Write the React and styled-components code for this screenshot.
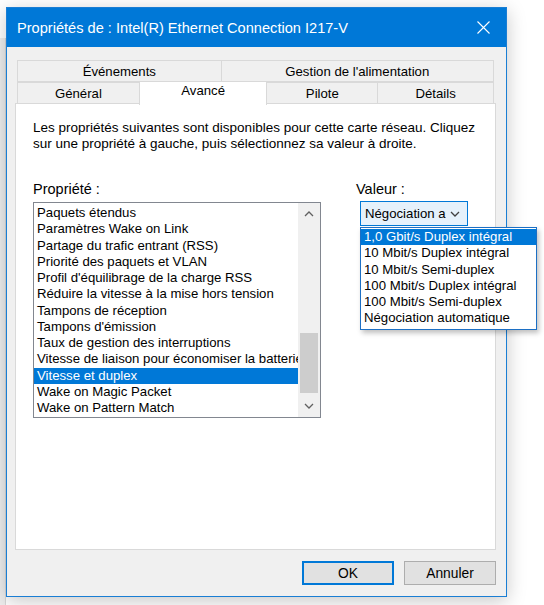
import React from "react";
import styled, { createGlobalStyle } from "styled-components";

const Global = createGlobalStyle`
  html, body { margin: 0; padding: 0; background: #ffffff; }
  body { font-family: "Liberation Sans", Arial, sans-serif; font-size: 13.2px; color: #000; }
  * { box-sizing: border-box; }
`;

const Page = styled.div`
  width: 544px;
  height: 605px;
  display: flex;
  align-items: flex-start;
  background: #ffffff;
  overflow: hidden;
`;

const BackWindow = styled.div`
  width: 6px;
  height: 605px;
  margin-top: 38px;
  background: #eeeeee;
  border-right: 1px solid #d8d8d8;
`;

const Window = styled.div`
  margin-top: 7px;
  width: 501px;
  height: 590px;
  border: 1px solid #1a7ed4;
  background: #f0f0f0;
  display: flex;
  flex-direction: column;
  box-shadow: 0 4px 18px rgba(0, 0, 0, 0.22);
`;

const TitleBar = styled.div`
  height: 39px;
  background: #0078d7;
  display: flex;
  align-items: center;
  justify-content: space-between;
  padding: 0 16px 0 10px;
  color: #ffffff;
`;

const Title = styled.div`
  font-size: 14.6px;
`;

const Body = styled.div`
  flex: 1;
  display: flex;
  flex-direction: column;
  padding: 13px 10px 10px 8px;
`;

const Tabs = styled.div`
  display: flex;
  flex-direction: column;
  padding-left: 2px;
  width: 479px;
`;

const TabRow = styled.div`
  display: flex;
  height: 22px;
  align-items: flex-end;
`;

const Tab = styled.div`
  width: ${(p) => p.$w}px;
  height: ${(p) => (p.$active ? 24 : 22)}px;
  margin-left: -1px;
  margin-bottom: ${(p) => (p.$active ? -1 : 0)}px;
  &:first-child { margin-left: 0; }
  background: ${(p) => (p.$active ? "#ffffff" : "#f0f0f0")};
  border: 1px solid #d9d9d9;
  border-bottom: ${(p) => (p.$active ? "none" : "1px solid #d9d9d9")};
  position: relative;
  z-index: ${(p) => (p.$active ? 2 : 1)};
  display: flex;
  align-items: ${(p) => (p.$active ? "flex-start" : "center")};
  padding-top: ${(p) => (p.$active ? 1 : 0)}px;
  justify-content: center;
  font-size: 13.2px;
`;

const Panel = styled.div`
  margin-top: -1px;
  width: 481px;
  height: 447px;
  background: #ffffff;
  border: 1px solid #d9d9d9;
  padding: 16px 10px 0 17px;
  display: flex;
  flex-direction: column;
`;

const Intro = styled.p`
  margin: 0;
  line-height: 16px;
  font-size: 13.5px;
  white-space: nowrap;
`;

const Columns = styled.div`
  margin-top: 28px;
  display: flex;
  gap: 35px;
`;

const Column = styled.div`
  display: flex;
  flex-direction: column;
`;

const Label = styled.div`
  font-size: 14.5px;
  line-height: 16px;
  margin-top: 1px;
  margin-bottom: ${(p) => p.$gap || 5}px;
`;

const ListBox = styled.div`
  width: 288px;
  height: 216px;
  border: 1px solid #828790;
  display: flex;
  background: #ffffff;
`;

const ListItems = styled.div`
  flex: 1;
  padding-top: 2px;
  overflow: hidden;
`;

const ListItem = styled.div`
  height: 16.25px;
  line-height: 16.25px;
  padding-left: 3px;
  white-space: nowrap;
  overflow: hidden;
  background: ${(p) => (p.$selected ? "#0078d7" : "transparent")};
  color: ${(p) => (p.$selected ? "#ffffff" : "#000000")};
`;

const ScrollBar = styled.div`
  width: 22px;
  background: #f0f0f0;
  display: flex;
  flex-direction: column;
  align-items: center;
`;

const ScrollButton = styled.div`
  height: 22px;
  width: 100%;
  display: flex;
  align-items: center;
  justify-content: center;
`;

const ScrollTrack = styled.div`
  flex: 1;
  width: 100%;
  display: flex;
  flex-direction: column;
  padding: 0 2px;
`;

const ScrollThumb = styled.div`
  margin-top: ${(p) => p.$top}px;
  height: ${(p) => p.$h}px;
  background: #cdcdcd;
`;

const ComboWrap = styled.div`
  position: relative;
  margin-left: 4px;
`;

const Combo = styled.div`
  width: 108px;
  height: 25px;
  background: #e5f1fb;
  border: 1px solid #0078d7;
  display: flex;
  align-items: center;
  padding-left: 4px;
  gap: 4px;
`;

const ComboText = styled.div`
  width: 81px;
  overflow: hidden;
  white-space: nowrap;
`;

const DropList = styled.div`
  position: absolute;
  left: 0;
  top: 26px;
  width: 177px;
  background: #ffffff;
  border: 1px solid #1c6fc4;
  padding: 1px 0 2px 0;
  box-shadow: 2px 3px 5px rgba(0, 0, 0, 0.25);
  z-index: 5;
`;

const DropItem = styled.div`
  height: 16.25px;
  line-height: 16.25px;
  padding-left: 3px;
  white-space: nowrap;
  background: ${(p) => (p.$selected ? "#0078d7" : "transparent")};
  color: ${(p) => (p.$selected ? "#ffffff" : "#000000")};
`;

const Footer = styled.div`
  display: flex;
  justify-content: flex-end;
  gap: 10px;
  margin-top: 11px;
`;

const Button = styled.button`
  width: 92px;
  height: 24px;
  font-family: inherit;
  font-size: 13.8px;
  color: #000;
  background: #e1e1e1;
  border: ${(p) => (p.$default ? "2px solid #0078d7" : "1px solid #adadad")};
  padding: 0;
  margin: 0;
`;

const Chevron = ({ dir = "down", color = "#606060", size = 10 }) => (
  <svg width={size} height={size * 0.6} viewBox="0 0 10 6">
    <path
      d={dir === "down" ? "M1 1 L5 5 L9 1" : "M1 5 L5 1 L9 5"}
      fill="none"
      stroke={color}
      strokeWidth="1.3"
    />
  </svg>
);

const CloseIcon = () => (
  <svg width="13" height="13" viewBox="0 0 13 13">
    <path d="M0.5 0.5 L12.5 12.5 M12.5 0.5 L0.5 12.5" stroke="#fff" strokeWidth="1.1" />
  </svg>
);

const properties = [
  "Paquets étendus",
  "Paramètres Wake on Link",
  "Partage du trafic entrant (RSS)",
  "Priorité des paquets et VLAN",
  "Profil d'équilibrage de la charge RSS",
  "Réduire la vitesse à la mise hors tension",
  "Tampons de réception",
  "Tampons d'émission",
  "Taux de gestion des interruptions",
  "Vitesse de liaison pour économiser la batterie",
  "Vitesse et duplex",
  "Wake on Magic Packet",
  "Wake on Pattern Match",
];

const values = [
  "1,0 Gbit/s Duplex intégral",
  "10 Mbit/s Duplex intégral",
  "10 Mbit/s Semi-duplex",
  "100 Mbit/s Duplex intégral",
  "100 Mbit/s Semi-duplex",
  "Négociation automatique",
];

export default function App() {
  return (
    <>
      <Global />
      <Page>
        <BackWindow />
        <Window>
          <TitleBar>
            <Title>Propriétés de : Intel(R) Ethernet Connection I217-V</Title>
            <CloseIcon />
          </TitleBar>
          <Body>
            <Tabs>
              <TabRow>
                <Tab $w={205}>Événements</Tab>
                <Tab $w={274}>Gestion de l'alimentation</Tab>
              </TabRow>
              <TabRow>
                <Tab $w={123}>Général</Tab>
                <Tab $w={129} $active>Avancé</Tab>
                <Tab $w={112}>Pilote</Tab>
                <Tab $w={117}>Détails</Tab>
              </TabRow>
            </Tabs>
            <Panel>
              <Intro>
                Les propriétés suivantes sont disponibles pour cette carte réseau. Cliquez
                <br />
                sur une propriété à gauche, puis sélectionnez sa valeur à droite.
              </Intro>
              <Columns>
                <Column>
                  <Label>Propriété :</Label>
                  <ListBox>
                    <ListItems>
                      {properties.map((p) => (
                        <ListItem key={p} $selected={p === "Vitesse et duplex"}>
                          {p}
                        </ListItem>
                      ))}
                    </ListItems>
                    <ScrollBar>
                      <ScrollButton>
                        <Chevron dir="up" />
                      </ScrollButton>
                      <ScrollTrack>
                        <ScrollThumb $top={108} $h={60} />
                      </ScrollTrack>
                      <ScrollButton>
                        <Chevron dir="down" />
                      </ScrollButton>
                    </ScrollBar>
                  </ListBox>
                </Column>
                <Column>
                  <Label $gap={4}>Valeur :</Label>
                  <ComboWrap>
                    <Combo>
                      <ComboText>Négociation automatique</ComboText>
                      <Chevron dir="down" color="#404040" />
                    </Combo>
                    <DropList>
                      {values.map((v, i) => (
                        <DropItem key={v} $selected={i === 0}>
                          {v}
                        </DropItem>
                      ))}
                    </DropList>
                  </ComboWrap>
                </Column>
              </Columns>
            </Panel>
            <Footer>
              <Button $default>OK</Button>
              <Button>Annuler</Button>
            </Footer>
          </Body>
        </Window>
      </Page>
    </>
  );
}
